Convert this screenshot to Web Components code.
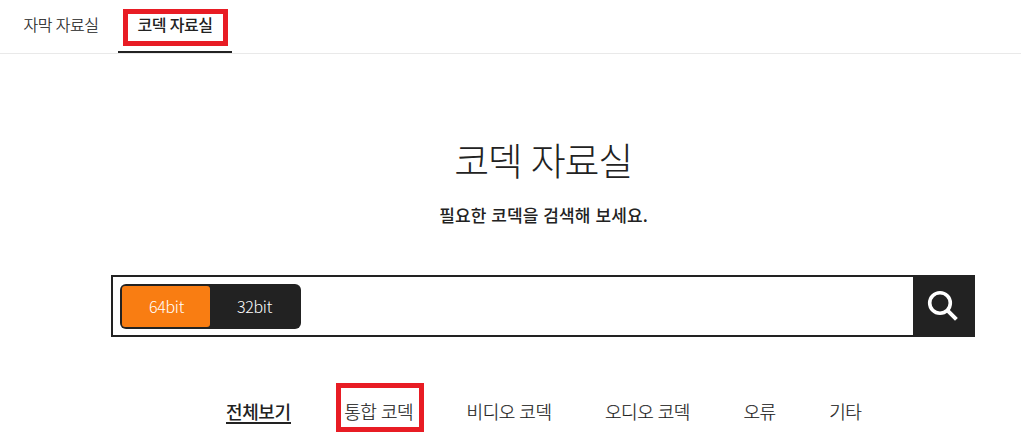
<!DOCTYPE html>
<html lang="ko">
<head>
<meta charset="utf-8">
<title>코덱 자료실</title>
<style>
body {
    margin: 0;
    background: #fff;
    color: #222;
    font-family: 'Noto Sans CJK KR', 'Noto Sans', sans-serif;
    font-weight: 300;
}
</style>
</head>
<body>
<codec-page>
    <tab-bar slot="tabs">
        <tab-item>자막 자료실</tab-item>
        <tab-item active marked>코덱 자료실</tab-item>
    </tab-bar>
    <page-title slot="title">코덱 자료실<span slot="sub">필요한 코덱을 검색해 보세요.</span></page-title>
    <search-box slot="search">
        <bit-toggle>
            <span slot="on">64bit</span>
            <span slot="off">32bit</span>
        </bit-toggle>
    </search-box>
    <category-nav slot="nav">
        <category-item active>전체보기</category-item>
        <category-item marked>통합 코덱</category-item>
        <category-item>비디오 코덱</category-item>
        <category-item>오디오 코덱</category-item>
        <category-item>오류</category-item>
        <category-item>기타</category-item>
    </category-nav>
</codec-page>

<script>
function define(name, html) {
    const template = document.createElement('template');
    template.innerHTML = html;
    customElements.define(name, class extends HTMLElement {
        constructor() {
            super();
            this.attachShadow({ mode: 'open' });
            this.shadowRoot.appendChild(template.content.cloneNode(true));
        }
    });
}

define('codec-page', `
<style>
:host {
    display: block;
    height: 445px;
    overflow: hidden;
}
main {
    display: flex;
    flex-direction: column;
    width: 864px;
    margin-left: 111px;
}
</style>
<slot name="tabs"></slot>
<main>
    <slot name="title"></slot>
    <slot name="search"></slot>
    <slot name="nav"></slot>
</main>
`);

define('tab-bar', `
<style>
:host {
    display: flex;
    box-sizing: border-box;
    height: 54px;
    padding-left: 4px;
    border-bottom: 1px solid #e9e9e9;
}
</style>
<slot></slot>
`);

define('tab-item', `
<style>
:host {
    position: relative;
    box-sizing: border-box;
    width: 114px;
    height: 53px;
    font-size: 16px;
    line-height: 48px;
    letter-spacing: -0.5px;
    text-align: center;
    white-space: nowrap;
    -webkit-text-stroke: 0.2px #222;
}
:host([active]) {
    border-bottom: 2px solid #222;
    font-weight: 500;
    -webkit-text-stroke: 0;
}
.mark {
    display: none;
}
/* red frame over the tab */
:host([marked]) .mark {
    display: block;
    position: absolute;
    box-sizing: border-box;
    left: 5px;
    top: 9px;
    width: 105px;
    height: 37px;
    border: 5px solid #e81c24;
}
</style>
<slot></slot>
<div class="mark"></div>
`);

define('page-title', `
<style>
:host {
    display: block;
    height: 221px;
    text-align: center;
}
h1 {
    margin: 0;
    padding-top: 75px;
    font-size: 38px;
    font-weight: 300;
    line-height: 60px;
    letter-spacing: -1.3px;
}
p {
    margin: 11px 0 0;
    padding-left: 1px;
    font-size: 17px;
    font-weight: 500;
    line-height: 30px;
    letter-spacing: 0.1px;
}
</style>
<h1><slot></slot></h1>
<p><slot name="sub"></slot></p>
`);

define('search-box', `
<style>
:host {
    display: flex;
    justify-content: space-between;
    align-items: center;
    box-sizing: border-box;
    height: 62px;
    padding-left: 7px;
    border: 2px solid #222;
}
button {
    width: 60px;
    height: 58px;
    padding: 0;
    border: 0;
    background: #222;
}
svg {
    display: block;
}
</style>
<slot></slot>
<button aria-label="검색">
    <svg width="60" height="58" viewBox="0 0 60 58" fill="none" stroke="#fff">
        <circle cx="27" cy="26" r="10.3" stroke-width="3.6"/>
        <path d="M34.4 33.4L43.4 42.4" stroke-width="4"/>
    </svg>
</button>
`);

define('bit-toggle', `
<style>
:host {
    display: flex;
    box-sizing: border-box;
    width: 181px;
    height: 45px;
    padding: 2px;
    border-radius: 6px;
    background: #222;
    color: #fff;
    font-size: 16px;
    line-height: 40px;
    letter-spacing: -0.3px;
    text-align: center;
}
div {
    box-sizing: border-box;
    width: 88px;
    padding-left: 1px;
}
.on {
    border-radius: 3px;
    background: #f97d12;
}
</style>
<div class="on"><slot name="on"></slot></div>
<div><slot name="off"></slot></div>
`);

define('category-nav', `
<style>
:host {
    display: flex;
    gap: 53.6px;
    padding: 59px 0 0 115px;
}
</style>
<slot></slot>
`);

define('category-item', `
<style>
:host {
    position: relative;
    font-size: 18px;
    line-height: 30px;
    letter-spacing: -0.5px;
    white-space: nowrap;
    -webkit-text-stroke: 0.2px #222;
}
:host([active]) {
    letter-spacing: -0.4px;
    -webkit-text-stroke: 0;
}
:host([active]) .text {
    display: block;
    height: 26px;
    border-bottom: 2px solid #222;
    font-weight: 500;
}
.mark {
    display: none;
}
/* red frame over the category */
:host([marked]) .mark {
    display: block;
    position: absolute;
    box-sizing: border-box;
    left: -8px;
    top: -13px;
    width: 88px;
    height: 49px;
    border: 5px solid #e81c24;
}
</style>
<span class="text"><slot></slot></span>
<div class="mark"></div>
`);
</script>
</body>
</html>
